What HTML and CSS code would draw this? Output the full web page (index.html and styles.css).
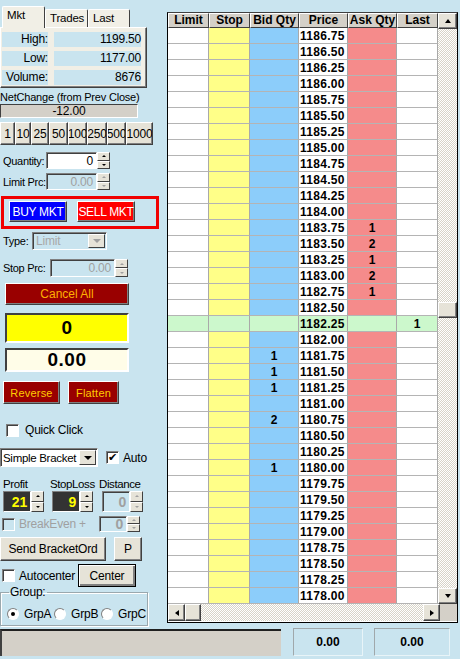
FILE: index.html
```html
<!DOCTYPE html>
<html lang="en">
<head>
    <meta charset="UTF-8">
    <meta name="viewport" content="width=device-width, initial-scale=1.0">
    <title>Price Ladder</title>
    <link rel="stylesheet" href="styles.css">
</head>
<body>
<div class="app">
    <div class="main">
        <div class="left">
            <div class="tabs">
                <div class="tab active">Mkt</div>
                <div class="tab">Trades</div>
                <div class="tab">Last</div>
            </div>
            <div class="tabpage">
                <div class="stat"><span class="stat-label">High:</span><span class="stat-val">1199.50</span></div>
                <div class="stat"><span class="stat-label">Low:</span><span class="stat-val">1177.00</span></div>
                <div class="stat"><span class="stat-label">Volume:</span><span class="stat-val">8676</span></div>
            </div>

            <div class="net-label">NetChange (from Prev Close)</div>
            <div class="net-box">-12.00</div>

            <div class="qty-btns">
                <div class="btn" style="width:15px">1</div>
                <div class="btn" style="width:16px">10</div>
                <div class="btn" style="width:18px">25</div>
                <div class="btn" style="width:19px">50</div>
                <div class="btn" style="width:19px">100</div>
                <div class="btn" style="width:20px">250</div>
                <div class="btn" style="width:19px">500</div>
                <div class="btn" style="width:27px">1000</div>
            </div>

            <div class="row row-qty">
                <span class="lbl">Quantity:</span>
                <div class="input qty-in">0</div>
                <div class="spin"><b></b><b class="down"></b></div>
            </div>
            <div class="row row-limit">
                <span class="lbl">Limit Prc:</span>
                <div class="input qty-in disabled">0.00</div>
                <div class="spin disabled"><b></b><b class="down"></b></div>
            </div>

            <div class="mkt-frame">
                <div class="btn buy">BUY MKT</div>
                <div class="btn sell">SELL MKT</div>
            </div>

            <div class="row row-type">
                <span class="lbl">Type:</span>
                <div class="select type-sel disabled"><span>Limit</span><i class="drop"></i></div>
            </div>
            <div class="row row-stop">
                <span class="lbl">Stop Prc:</span>
                <div class="input stop-in disabled">0.00</div>
                <div class="spin disabled"><b></b><b class="down"></b></div>
            </div>

            <div class="btn cancel-all">Cancel All</div>
            <div class="pos-box">0</div>
            <div class="pnl-box">0.00</div>

            <div class="row row-actions">
                <div class="btn action reverse">Reverse</div>
                <div class="btn action flatten">Flatten</div>
            </div>

            <div class="row row-quick">
                <span class="check"></span><span>Quick Click</span>
            </div>

            <div class="row row-bracket">
                <div class="select bracket-sel"><span>Simple Bracket</span><i class="drop"></i></div>
                <span class="check checked">&#10004;</span><span class="auto-lbl">Auto</span>
            </div>

            <div class="row row-blabels">
                <span class="bl-profit">Profit</span>
                <span class="bl-stop">StopLoss</span>
                <span class="bl-dist">Distance</span>
            </div>
            <div class="row row-bvals">
                <div class="bval">21</div>
                <div class="spin tall"><b></b><b class="down"></b></div>
                <div class="bval gap">9</div>
                <div class="spin tall"><b></b><b class="down"></b></div>
                <div class="input small disabled gap2">0</div>
                <div class="spin tall disabled"><b></b><b class="down"></b></div>
            </div>
            <div class="row row-breakeven">
                <span class="check disabled"></span><span class="muted">BreakEven +</span>
                <div class="input small disabled be-in">0</div>
                <div class="spin disabled"><b></b><b class="down"></b></div>
            </div>

            <div class="row row-send">
                <div class="btn send">Send BracketOrd</div>
                <div class="btn pbtn">P</div>
            </div>

            <div class="row row-center">
                <span class="check"></span><span>Autocenter</span>
                <div class="btn center-btn">Center</div>
            </div>

            <fieldset class="group">
                <legend>Group:</legend>
                <span class="radio on"></span><span class="radio-lbl">GrpA</span>
                <span class="radio"></span><span class="radio-lbl">GrpB</span>
                <span class="radio"></span><span class="radio-lbl">GrpC</span>
            </fieldset>
        </div>

        <div class="ladder">
            <div class="ladder-top">
                <div class="grid">
                    <div class="head">
                        <div>Limit</div><div>Stop</div><div>Bid Qty</div><div>Price</div><div>Ask Qty</div><div>Last</div>
                    </div>
                    <div id="rows"></div>
                </div>
                <div class="vscroll">
                    <div class="sb-btn"><i class="tri up"></i></div>
                    <div class="sb-track">
                        <div class="sb-thumb"></div>
                    </div>
                    <div class="sb-btn"><i class="tri dn"></i></div>
                </div>
            </div>
            <div class="hscroll">
                <div class="sb-btn"><i class="tri lt"></i></div>
                <div class="sb-btn"></div>
                <div class="sb-track"></div>
                <div class="sb-btn"><i class="tri rt"></i></div>
                <div class="sb-corner"></div>
            </div>
        </div>
    </div>

    <div class="status">
        <div class="status-bar"></div>
        <div class="status-box first">0.00</div>
        <div class="status-box second">0.00</div>
    </div>
</div>

<script>
    // build the price ladder rows
    const bids = { '1181.75': 1, '1181.50': 1, '1181.25': 1, '1180.75': 2, '1180.00': 1 };
    const asks = { '1183.75': 1, '1183.50': 2, '1183.25': 1, '1183.00': 2, '1182.75': 1 };
    const lastTrade = { '1182.25': 1 };
    const rows = document.getElementById('rows');

    for (let i = 0; i < 36; i++) {
        const price = (1186.75 - i * 0.25).toFixed(2);
        const row = document.createElement('div');
        row.className = 'lrow' + (price === '1182.25' ? ' current' : '');
        row.innerHTML =
            '<div class="c-limit"></div>' +
            '<div class="c-stop"></div>' +
            '<div class="c-bid">' + (bids[price] || '') + '</div>' +
            '<div class="c-price">' + price + '</div>' +
            '<div class="c-ask">' + (asks[price] || '') + '</div>' +
            '<div class="c-last">' + (lastTrade[price] || '') + '</div>';
        rows.appendChild(row);
    }
</script>
</body>
</html>
```

FILE: styles.css
```css
/* page */
body {
    margin: 0;
    background-color: #c9e4ef;
    font-family: 'Liberation Sans', Arial, sans-serif;
    font-size: 11px;
    color: #000;
    width: 460px;
    height: 659px;
    overflow: hidden;
}

.app {
    display: flex;
    flex-direction: column;
    height: 659px;
}

.main {
    display: flex;
    height: 628px;
}

.left {
    width: 167px;
    flex-shrink: 0;
    letter-spacing: -0.2px;
    white-space: nowrap;
}

/* generic 3d pieces */
.btn {
    box-sizing: border-box;
    display: flex;
    align-items: center;
    justify-content: center;
    flex-shrink: 0;
    background-color: #e6e3d8;
    border: 1px solid;
    border-color: #fff #404040 #404040 #fff;
    box-shadow: inset -1px -1px #808080;
    overflow: hidden;
    white-space: nowrap;
}

.input {
    box-sizing: border-box;
    flex-shrink: 0;
    background-color: #fff;
    border: 1px solid;
    border-color: #808080 #fff #fff #808080;
    box-shadow: inset 1px 1px #404040;
    text-align: right;
    padding: 1px 3px 0 0;
    font-size: 12px;
    height: 100%;
}

.input.disabled {
    background-color: #c9e4ef;
    color: #a0a0a0;
}

.spin {
    display: flex;
    flex-direction: column;
    flex-shrink: 0;
    width: 13px;
    height: 17px;
}

.spin b {
    flex: 1;
    display: flex;
    align-items: center;
    justify-content: center;
    background-color: #e6e3d8;
    border: 1px solid;
    border-color: #fff #404040 #404040 #fff;
    box-sizing: border-box;
}

.spin b::after {
    content: '';
    border-left: 2px solid transparent;
    border-right: 2px solid transparent;
    border-bottom: 2px solid #000;
}

.spin b.down::after {
    border-bottom: none;
    border-top: 2px solid #000;
}

.spin.disabled b::after {
    border-bottom-color: #a0a0a0;
    border-top-color: #a0a0a0;
}

.spin.tall {
    height: 21px;
}

.row {
    display: flex;
    align-items: center;
}

.row > * {
    flex-shrink: 0;
}

.lbl {
    padding-left: 3px;
    font-size: 11px;
    letter-spacing: -0.3px;
}

/* tabs */
.tabs {
    display: flex;
    padding: 6px 0 0 2px;
    height: 21px;
    align-items: flex-end;
}

.tab {
    box-sizing: border-box;
    height: 18px;
    background-color: #f1efe6;
    border: 1px solid;
    border-bottom: none;
    border-color: #fff #404040 #fff #fff;
    border-radius: 2px 2px 0 0;
    font-size: 11.5px;
    padding: 2px 0 0 4px;
}

.tab.active {
    width: 43px;
    height: 22px;
    margin-bottom: -1px;
    position: relative;
    padding: 2px 0 0 4px;
}

.tab:nth-child(2) { width: 43px; }
.tab:nth-child(3) { width: 42px; }

.tabpage {
    box-sizing: border-box;
    width: 147px;
    height: 61px;
    background-color: #f1efe6;
    border: 1px solid;
    border-color: #fff #404040 #404040 #fff;
    box-shadow: inset -1px -1px #808080;
    padding: 4px 0 0 1px;
}

.stat {
    display: flex;
    height: 15px;
    margin-bottom: 4px;
    font-size: 12px;
    line-height: 15px;
}

.stat-label {
    width: 46px;
    background-color: #c9e4ef;
    text-align: right;
}

.stat-val {
    width: 87px;
    margin-left: 6px;
    background-color: #c9e4ef;
    text-align: right;
}

.net-label {
    margin-top: 3px;
    height: 13px;
    line-height: 13px;
    font-size: 11px;
}

.net-box {
    box-sizing: border-box;
    width: 138px;
    height: 14px;
    background-color: #d4d0c8;
    border: 1px solid;
    border-color: #404040 #fff #fff #404040;
    text-align: center;
    line-height: 12px;
    font-size: 12px;
}

.qty-btns {
    display: flex;
    margin-top: 4px;
    height: 23px;
}

.qty-btns .btn {
    font-size: 12px;
    height: 23px;
}

.row-qty { margin-top: 7px; height: 17px; }
.row-limit { margin-top: 4px; height: 17px; }

.row-qty .lbl, .row-limit .lbl { width: 43px; }

.qty-in {
    width: 51px;
}

/* market buttons */
.mkt-frame {
    box-sizing: border-box;
    display: flex;
    gap: 10px;
    width: 158px;
    height: 33px;
    margin: 6px 0 0 1px;
    border: 3px solid #f00000;
    padding: 2px 0 0 5px;
}

.mkt-frame .btn {
    width: 58px;
    height: 21px;
    color: #fff;
    font-size: 12px;
    letter-spacing: -0.3px;
}

.btn.buy { background-color: #0000ff; }
.btn.sell { background-color: #ff0000; }

.select {
    box-sizing: border-box;
    display: flex;
    align-items: center;
    background-color: #fff;
    border: 1px solid;
    border-color: #808080 #fff #fff #808080;
    box-shadow: inset 1px 1px #404040;
    height: 100%;
    padding: 0 1px 0 3px;
    font-size: 12px;
}

.select span {
    flex: 1;
    overflow: hidden;
}

.select.disabled {
    background-color: #c9e4ef;
    color: #a8a8a8;
}

.drop {
    box-sizing: border-box;
    flex-shrink: 0;
    width: 17px;
    height: calc(100% - 2px);
    display: flex;
    align-items: center;
    justify-content: center;
    background-color: #e6e3d8;
    border: 1px solid;
    border-color: #fff #404040 #404040 #fff;
}

.drop::after {
    content: '';
    border-left: 4px solid transparent;
    border-right: 4px solid transparent;
    border-top: 4px solid #000;
}

.select.disabled .drop::after {
    border-top-color: #a0a0a0;
}

.row-type { margin-top: 3px; height: 18px; }
.row-type .lbl { width: 29px; }
.type-sel { width: 75px; }

.row-stop { margin-top: 9px; height: 18px; }
.row-stop .lbl { width: 47px; }
.stop-in { width: 65px; }
.row-stop .spin { height: 18px; }

.cancel-all {
    width: 124px;
    height: 22px;
    margin: 6px 0 0 5px;
    background-color: #990000;
    color: #ffb000;
    font-size: 12px;
    letter-spacing: 0;
}

.pos-box, .pnl-box {
    box-sizing: border-box;
    width: 124px;
    margin-left: 5px;
    border: 2px solid;
    border-color: #404040 #fff #fff #404040;
    text-align: center;
    font-weight: bold;
    font-size: 19px;
    letter-spacing: 0.5px;
}

.pos-box {
    margin-top: 8px;
    height: 30px;
    line-height: 26px;
    background-color: #ffff00;
}

.pnl-box {
    margin-top: 5px;
    height: 24px;
    line-height: 20px;
    background-color: #fffde8;
}

.row-actions { margin-top: 9px; height: 23px; }

.action {
    height: 23px;
    background-color: #990000;
    color: #ffcc00;
    font-size: 11px;
    letter-spacing: 0.2px;
}

.reverse { width: 57px; margin-left: 3px; }
.flatten { width: 51px; margin-left: 8px; }

/* checkboxes and radios */
.check {
    box-sizing: border-box;
    display: inline-flex;
    align-items: center;
    justify-content: center;
    flex-shrink: 0;
    width: 13px;
    height: 13px;
    background-color: #fff;
    border: 1px solid;
    border-color: #808080 #fff #fff #808080;
    box-shadow: inset 1px 1px #404040;
    font-size: 11px;
    line-height: 1;
}

.check.disabled {
    background-color: #c9e4ef;
}

.row-quick { margin-top: 19px; height: 14px; }
.row-quick .check { margin: 0 6px 0 6px; }
.row-quick span:last-child { font-size: 12px; }

.row-bracket { margin-top: 11px; height: 19px; }
.bracket-sel { width: 98px; font-size: 11.5px; letter-spacing: -0.3px; padding-left: 2px; }
.row-bracket .check { margin: 0 4px 0 8px; }
.auto-lbl { font-size: 12px; }

.row-blabels {
    margin-top: 10px;
    height: 13px;
    font-size: 11.5px;
    letter-spacing: -0.4px;
}

.bl-profit { width: 47px; padding-left: 3px; }
.bl-stop { width: 49px; }

.row-bvals { margin-top: 1px; height: 21px; }

.bval {
    box-sizing: border-box;
    width: 28px;
    height: 21px;
    margin-left: 3px;
    background-color: #333;
    border: 1px solid;
    border-color: #808080 #fff #fff #808080;
    color: #ffff00;
    font-weight: bold;
    font-size: 14px;
    text-align: right;
    padding: 2px 3px 0 0;
}

.bval.gap { margin-left: 8px; }

.input.small {
    width: 28px;
    height: 21px;
    font-weight: bold;
    font-size: 14px;
}

.input.gap2 { margin-left: 9px; }
.row-bvals .input.small { padding-top: 2px; }

.row-breakeven { margin-top: 4px; height: 16px; }
.row-breakeven .check { margin: 0 4px 0 2px; }
.muted { color: #a0a0a0; font-size: 12px; width: 80px; }
.row-breakeven .input.small { height: 16px; padding-top: 0; line-height: 14px; }
.row-breakeven .spin { height: 16px; }

.row-send { margin-top: 5px; height: 24px; }
.send { width: 106px; height: 24px; font-size: 12px; }
.pbtn { width: 28px; height: 24px; margin-left: 8px; font-size: 12px; }

.row-center { margin-top: 3px; height: 23px; }
.row-center .check { margin: 0 4px 0 2px; }
.row-center span:nth-child(2) { font-size: 12px; width: 59px; }

.center-btn {
    width: 58px;
    height: 23px;
    font-size: 12px;
    border-color: #000;
    box-shadow: inset 1px 1px #fff, inset -2px -2px #808080;
}

.group {
    box-sizing: border-box;
    width: 147px;
    height: 41px;
    margin: -2px 0 0 0;
    padding: 3px 0 0 5px;
    border: 1px solid #9aa8ae;
    box-shadow: 1px 1px #fff, inset 1px 1px #fff;
    display: flex;
    align-items: center;
    font-size: 12px;
}

.group legend {
    padding: 0 1px;
    margin-left: 3px;
    font-size: 12px;
}

.radio {
    box-sizing: border-box;
    display: inline-flex;
    align-items: center;
    justify-content: center;
    flex-shrink: 0;
    width: 12px;
    height: 12px;
    border-radius: 50%;
    background-color: #fff;
    border: 1px solid;
    border-color: #808080 #fff #fff #808080;
    margin: 0 5px 0 1px;
}

.radio.on::after {
    content: '';
    width: 4px;
    height: 4px;
    border-radius: 50%;
    background-color: #000;
}

.radio-lbl { width: 29px; flex-shrink: 0; }

/* price ladder */
.ladder {
    box-sizing: border-box;
    margin-top: 12px;
    width: 291px;
    height: 611px;
    border: 1px solid #000;
    border-top-color: #404040;
    background-color: #fff;
    display: flex;
    flex-direction: column;
}

.ladder-top {
    display: flex;
}

.grid {
    width: 270px;
}

.head, .lrow {
    display: grid;
    grid-template-columns: 41px 41px 49px 49px 49px 41px;
}

.head div {
    box-sizing: border-box;
    height: 15px;
    background-color: #d4d0c8;
    border: 1px solid;
    border-color: #fff #404040 #404040 #fff;
    font-weight: bold;
    font-size: 12px;
    text-align: center;
    line-height: 13px;
}

.lrow div {
    box-sizing: border-box;
    height: 16px;
    border-right: 1px solid #a9a9a9;
    border-bottom: 1px solid #b4b4b4;
    font-weight: bold;
    font-size: 12px;
    line-height: 16px;
    text-align: center;
}

.c-limit, .c-last, .c-price { background-color: #fff; }
.c-stop { background-color: #ffff88; }
.c-bid { background-color: #8ccdfa; }
.c-ask { background-color: #f58b8b; }

.lrow .c-price {
    text-align: left;
    padding-left: 1px;
    letter-spacing: 0.3px;
}

.lrow.current div {
    background-color: #ccf8cc;
}

.vscroll {
    width: 19px;
    height: 591px;
    display: flex;
    flex-direction: column;
}

.sb-btn {
    box-sizing: border-box;
    width: 18px;
    height: 16px;
    flex-shrink: 0;
    display: flex;
    align-items: center;
    justify-content: center;
    background-color: #e6e3d8;
    border: 1px solid;
    border-color: #fff #404040 #404040 #fff;
    box-shadow: inset -1px -1px #808080;
}

.vscroll .sb-btn { width: 19px; }

.sb-track {
    flex: 1;
    background: repeating-conic-gradient(#ffffff 0 25%, #d8d4c8 0 50%) 0 0 / 2px 2px;
}

.vscroll .sb-track {
    padding-top: 273px;
}

.sb-thumb {
    box-sizing: border-box;
    height: 16px;
    background-color: #e6e3d8;
    border: 1px solid;
    border-color: #fff #404040 #404040 #fff;
    box-shadow: inset -1px -1px #808080;
}

.tri {
    width: 0;
    height: 0;
}

.tri.up { border: 3px solid transparent; border-top: none; border-bottom: 4px solid #000; }
.tri.dn { border: 3px solid transparent; border-bottom: none; border-top: 4px solid #000; }
.tri.lt { border: 3px solid transparent; border-left: none; border-right: 4px solid #000; }
.tri.rt { border: 3px solid transparent; border-right: none; border-left: 4px solid #000; }

.hscroll {
    display: flex;
    height: 17px;
}

.hscroll .sb-btn { height: 17px; width: 17px; }
.hscroll .sb-btn:nth-child(2) { width: 16px; }

.sb-corner {
    width: 17px;
    background-color: #d4d0c8;
}

/* bottom status area */
.status {
    display: flex;
    height: 31px;
    align-items: flex-start;
}

.status-bar {
    box-sizing: border-box;
    width: 281px;
    height: 27px;
    margin-top: 1px;
    background-color: #d4d0c8;
    border-top: 2px solid #202020;
    border-left: 2px solid #404040;
}

.status-box {
    box-sizing: border-box;
    height: 28px;
    border: 1px solid #a0a8ab;
    border-right-color: #e8f4f8;
    border-bottom-color: #e8f4f8;
    font-weight: bold;
    font-size: 12px;
    text-align: center;
    line-height: 26px;
}

.status-box.first { width: 70px; margin-left: 12px; }
.status-box.second { width: 76px; margin-left: 11px; }
```
